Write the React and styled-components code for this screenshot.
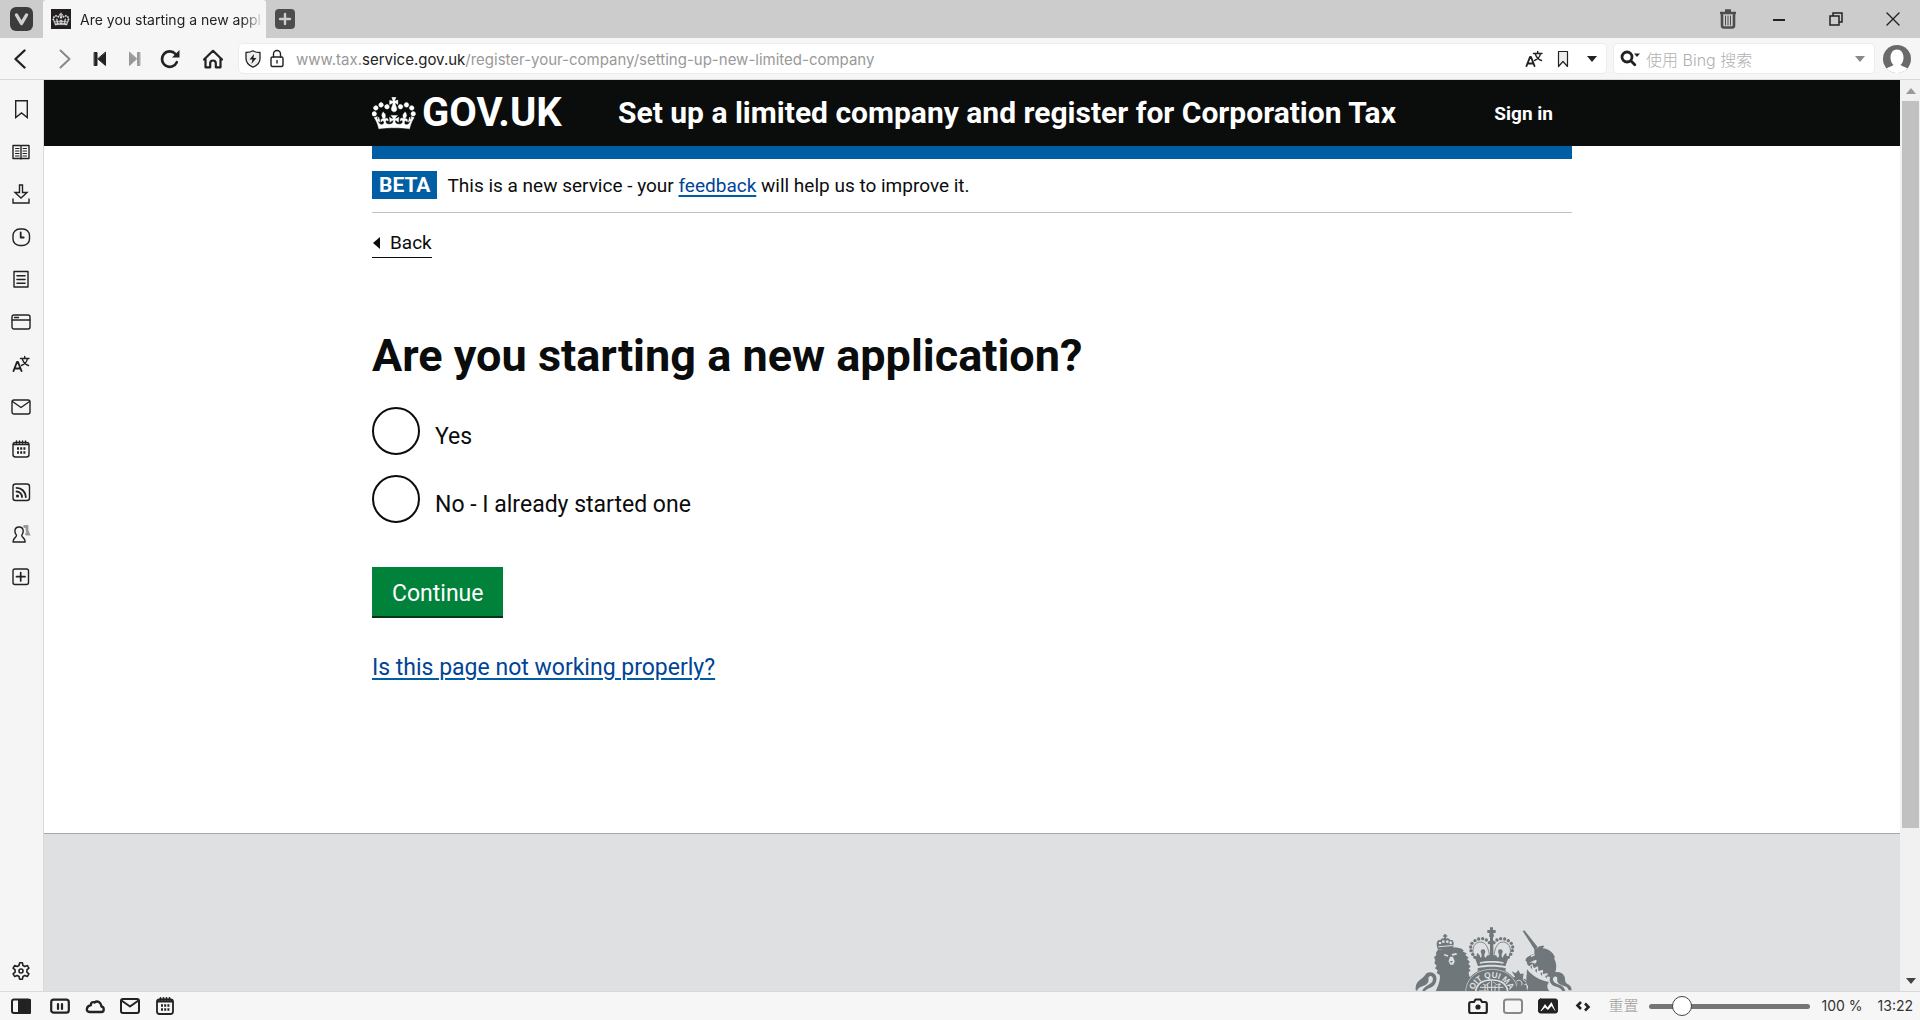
import React from "react";
import styled, { createGlobalStyle } from "styled-components";

const uiFont = `Inter, "Noto Sans CJK SC", sans-serif`;
const pageFont = `Roboto, sans-serif`;

const GlobalStyle = createGlobalStyle`
  *, *::before, *::after { box-sizing: border-box; }
  html, body { margin: 0; }
  button, input { font: inherit; }
`;

/* ---------- browser shell ---------- */

const Browser = styled.div`
  display: flex;
  flex-direction: column;
  height: 100vh;
  overflow: hidden;
  background: #f6f6f6;
  font-family: ${uiFont};
  font-size: 14px;
  color: #222;
`;

const TabBar = styled.div`
  display: flex;
  align-items: center;
  flex: none;
  height: 38px;
  padding: 0 15px 0 10px;
  background: #cccccc;
`;

const IconButton = styled.button`
  display: flex;
  align-items: center;
  justify-content: center;
  flex: none;
  width: ${(p) => p.$width || 24}px;
  height: 24px;
  margin: 0;
  padding: 0;
  border: 0;
  background: none;
  color: ${(p) => p.$color || "#222"};
`;

const Tab = styled.div`
  display: flex;
  align-items: center;
  gap: 9px;
  flex: none;
  width: 223px;
  height: 100%;
  margin: 0 7px 0 9px;
  padding: 0 2px 0 8px;
  border-radius: 3px 3px 0 0;
  background: #f6f6f6;
`;

const TabTitle = styled.span`
  flex: 1;
  padding-top: 1px;
  line-height: 20px;
  white-space: nowrap;
  color: #222;
  mask-image: linear-gradient(to right, #000 88%, transparent 100%);
`;

const WindowControls = styled.div`
  display: flex;
  align-items: center;
  gap: ${(p) => p.$gap}px;
  margin-left: auto;
`;

const Toolbar = styled.div`
  display: flex;
  align-items: center;
  flex: none;
  height: 42px;
  padding: 0 7px 0 8px;
  border-bottom: 1px solid #d9d9d9;
`;

const Group = styled.div`
  display: flex;
  align-items: center;
  gap: ${(p) => p.$gap}px;
  padding: 0 ${(p) => p.$side || 0}px;
`;

const Field = styled.div`
  display: flex;
  align-items: center;
  flex: ${(p) => (p.$width ? "none" : "1")};
  width: ${(p) => (p.$width ? `${p.$width}px` : "auto")};
  height: 31px;
  padding: 0 2px 0 4px;
  border: 1px solid #ececec;
  border-radius: 5px;
  background: #fff;
`;

const Address = styled.div`
  flex: 1;
  overflow: hidden;
  padding: 2px 0 0 8px;
  font-size: 15px;
  line-height: 20px;
  white-space: nowrap;
  color: #999;
`;

const Domain = styled.span`
  color: #222;
`;

const SearchInput = styled.input`
  flex: 1;
  min-width: 0;
  height: 26px;
  padding: 2px 0 0 4px;
  border: 0;
  outline: 0;
  background: none;
  font-size: 16px;
  font-weight: 300;
  &::placeholder { color: #b0b0b0; opacity: 1; }
`;

const Workspace = styled.div`
  display: flex;
  flex: 1;
  min-height: 0;
`;

const Panel = styled.nav`
  display: flex;
  flex-direction: column;
  align-items: center;
  justify-content: space-between;
  flex: none;
  width: 44px;
  padding: 8px 2px 8px 0;
  border-right: 1px solid #d9d9d9;
  background: #f5f5f5;
`;

const PanelList = styled.div`
  display: grid;
  grid-auto-rows: 1fr;
  align-items: center;
  height: 510px;
`;

const StatusBar = styled.footer`
  display: flex;
  align-items: center;
  justify-content: space-between;
  flex: none;
  height: 29px;
  padding: 0 7px 0 8px;
  border-top: 1px solid #d9d9d9;
  background: #f6f6f6;
`;

const ResetButton = styled.button`
  margin: 0 5px 0 2px;
  padding: 0;
  border: 0;
  background: none;
  font-size: 15px;
  font-weight: 300;
  line-height: 20px;
  color: #999;
`;

const ZoomSlider = styled.input`
  appearance: none;
  width: 161px;
  height: 20px;
  margin: 0;
  background: none;
  &::-webkit-slider-runnable-track {
    height: 5px;
    border-radius: 3px;
    background: #757575;
  }
  &::-webkit-slider-thumb {
    appearance: none;
    width: 20px;
    height: 20px;
    margin-top: -8px;
    border: 1px solid #444;
    border-radius: 50%;
    background: #fff;
  }
`;

const StatusText = styled.span`
  margin-left: ${(p) => p.$gap || 0}px;
  line-height: 20px;
  white-space: nowrap;
  color: #333;
`;

const ScrollBar = styled.div`
  display: flex;
  flex-direction: column;
  flex: none;
  width: 20px;
  padding: 0 1px 0 2px;
  background: #f1f1f1;
`;

const ScrollArrow = styled.button`
  display: flex;
  align-items: center;
  justify-content: center;
  height: 21px;
  padding: 0;
  border: 0;
  background: none;
  color: ${(p) => p.$color};
`;

const ScrollTrack = styled.div`
  display: grid;
  grid-template-rows: 727fr 142fr;
  flex: 1;
`;

const ScrollThumb = styled.div`
  background: #c1c1c1;
`;

/* ---------- web page ---------- */

const Page = styled.div`
  flex: 1;
  min-width: 0;
  overflow: hidden;
  background: #fff;
  font-family: ${pageFont};
  font-size: 23px;
  line-height: 30px;
  color: #0b0c0c;
`;

const Container = styled.div`
  max-width: 1200px;
  margin: 0 auto;
`;

const Header = styled.header`
  background: #0b0c0c;
`;

const HeaderRow = styled(Container)`
  display: flex;
  align-items: center;
  height: 66px;
`;

const Logo = styled.a`
  display: flex;
  align-items: center;
  gap: 6px;
  flex: none;
  width: 246px;
  font-size: 40px;
  font-weight: 700;
  line-height: 40px;
  text-decoration: none;
  color: #fff;
`;

const ServiceName = styled.a`
  font-size: 30px;
  font-weight: 700;
  line-height: 40px;
  white-space: nowrap;
  text-decoration: none;
  color: #fff;
`;

const SignIn = styled.a`
  margin-left: auto;
  padding-right: 19px;
  font-size: 19px;
  font-weight: 700;
  line-height: 25px;
  text-decoration: none;
  color: #fff;
`;

const BlueBar = styled(Container)`
  height: 13px;
  background: #005ea5;
`;

const PhaseBanner = styled(Container)`
  display: flex;
  align-items: center;
  gap: 10px;
  padding: 12px 0 13px;
  border-bottom: 1px solid #bfc1c3;
  font-size: 19px;
  line-height: 28px;
`;

const PhaseTag = styled.strong`
  padding: 0 7px;
  background: #005ea5;
  font-size: 21px;
  color: #fff;
`;

const PhaseText = styled.span`
  padding-top: 1px;
  line-height: 27px;
`;

const Link = styled.a`
  color: #004497;
  text-decoration: underline;
  text-decoration-color: #005ea5;
  text-decoration-thickness: 2px;
  text-underline-offset: 3px;
`;

const BackLink = styled.a`
  display: inline-flex;
  align-items: center;
  gap: 10px;
  margin-top: 17px;
  padding-bottom: 2px;
  border-bottom: 1px solid #0b0c0c;
  font-size: 19px;
  line-height: 25px;
  text-decoration: none;
  color: #0b0c0c;
`;

const Main = styled.main`
  padding: 73px 0 150px;
`;

const Question = styled.fieldset`
  display: flex;
  flex-direction: column;
  gap: 20px;
  margin: 0 0 44px;
  padding: 0;
  border: 0;
`;

const Heading = styled.h1`
  margin: 0 0 26px;
  font-size: 45px;
  font-weight: 700;
  line-height: 50px;
`;

const Choice = styled.div`
  display: flex;
  gap: 15px;
`;

const Radio = styled.input`
  appearance: none;
  flex: none;
  width: 48px;
  height: 48px;
  margin: 0;
  border: 2px solid #0b0c0c;
  border-radius: 50%;
  background: #fff;
`;

const ChoiceLabel = styled.label`
  padding-top: 15px;
`;

const ContinueButton = styled.button`
  display: block;
  margin: 0 0 37px;
  padding: 12px 20px 7px;
  border: 0;
  background: #00823b;
  box-shadow: 0 2px 0 #003618;
  line-height: 30px;
  color: #fff;
`;

const PageFooter = styled.footer`
  padding-top: 93px;
  border-top: 1px solid #a1acb2;
  background: #dee0e2;
`;

const FooterRow = styled(Container)`
  display: flex;
  justify-content: flex-end;
`;

/* ---------- drawings ---------- */

const crownPath =
  "M6.7 12.2c1 .4 2.1-.1 2.5-1s-.1-2.1-1-2.5c-1-.4-2.1.1-2.5 1-.4 1 0 2.1 1 2.5m-4.3 2.5c1 .4 2.1-.1 2.5-1s-.1-2.1-1-2.5c-1-.4-2.1.1-2.5 1-.5 1 0 2.1 1 2.5m-1.3 4.8c1 .4 2.1-.1 2.5-1 .4-1-.1-2.1-1-2.5-1-.4-2.1.1-2.5 1-.4 1 0 2.1 1 2.5m10.4-5.8c1 .4 2.1-.1 2.5-1s-.1-2.1-1-2.5c-1-.4-2.1.1-2.5 1s0 2.1 1 2.5m17.4-1.5c-1 .4-2.1-.1-2.5-1s.1-2.1 1-2.5c1-.4 2.1.1 2.5 1 .5 1 0 2.1-1 2.5m4.3 2.5c-1 .4-2.1-.1-2.5-1s.1-2.1 1-2.5c1-.4 2.1.1 2.5 1 .5 1 0 2.1-1 2.5m1.3 4.8c-1 .4-2.1-.1-2.5-1-.4-1 .1-2.1 1-2.5 1-.4 2.1.1 2.5 1 .4 1 0 2.1-1 2.5m-10.4-5.8c-1 .4-2.1-.1-2.5-1s.1-2.1 1-2.5c1-.4 2.1.1 2.5 1s0 2.1-1 2.5m-5.3-4.9 2.4 1.3V6.5l-2.4.8c-.1-.1-.1-.1-.2-.1s1-3 1-3h-3.4l1 3c-.1.1-.2.1-.2.1-.1.1-.1.1-.2.1l-2.4-.7v3.5L17 8.9c.1.1.2.2.3.2l-1.4 4.2c-.1.2-.1.4-.1.6 0 1.1.8 2 1.9 2.2h.7c1-.2 1.9-1.1 1.9-2.1 0-.2 0-.4-.1-.6l-1.4-4.3c-.1 0 0-.1.1-.3m-1 20.3c4.6 0 8.9.3 12.8.9 1.1-4.6 2.4-7.2 3.8-9.1l-2.6-.9c.3 1.3.3 1.9 0 2.8-.4-.4-.8-1.2-1.1-2.4l-1.2 4.2c.8-.5 1.4-.9 2-.9-1.2 2.6-2.7 3.2-3.6 3-1.2-.2-1.7-1.3-1.5-2.2.3-1.3 1.6-1.6 2.2-.1 1.2-2.4-.8-3.1-2.1-2.4 2-2 2.2-3.6.6-5.8-2.2 1.7-2.3 3.4-1.2 5.9-1.4-1.6-3.5-.8-2.8 1.7.9-1.4 2.1-.4 1.9.8-.2 1-1.7 1.9-3.5 1.7-2.6-.2-2.8-2.1-2.8-3.3.6-.1 1.8.5 2.8 1.7l.4-4.3c-1.1 1.1-2.1 1.3-3.2 1.4.4-1.1 2.1-2.7 2.1-2.7h-5.500s1.800 1.600 2.100 2.700c-1.100 0-2.100-.2-3.200-1.400l.4 4.300c1-1.200 2.200-1.800 2.800-1.700-.1 1.200-.2 3.100-2.800 3.300-1.900.2-3.300-.7-3.500-1.700-.2-1.200 1-2.200 1.900-.8.7-2.400-1.300-3.300-2.800-1.700 1.100-2.600 1-4.300-1.200-5.900-1.600 2.200-1.400 3.800.6 5.800-1.300-.7-3.200 0-2.100 2.400.6-1.500 1.900-1.100 2.200.1.2.9-.3 1.900-1.500 2.200-.9.2-2.500-.5-3.600-3 .6 0 1.200.3 2 .9l-1.200-4.200c-.3 1.100-.7 1.900-1.100 2.400-.3-.8-.2-1.400 0-2.800l-2.600.9c1.400 1.800 2.700 4.500 3.800 9.100 3.900-.6 8.300-.9 12.900-.9";

const Crown = ({ width, height }) => (
  <svg width={width} height={height} viewBox="0 4 36 27" fill="#fff" stroke="#fff" strokeWidth=".35" aria-hidden="true">
    <path d={crownPath} />
  </svg>
);

const Favicon = () => (
  <svg width="20" height="20" viewBox="-3 -4 42 42" aria-hidden="true">
    <rect x="-3" y="-4" width="42" height="42" fill="#231f20" />
    <path d={crownPath} fill="#ddd" stroke="#ddd" strokeWidth=".5" />
  </svg>
);

const Icon = ({ size = 20, children, stroke = 1.4, h }) => (
  <svg
    width={size}
    height={h || size}
    viewBox={`0 0 ${size} ${h || size}`}
    fill="none"
    stroke="currentColor"
    strokeWidth={stroke}
    strokeLinecap="round"
    strokeLinejoin="round"
    aria-hidden="true"
  >
    {children}
  </svg>
);

const VivaldiIcon = () => (
  <Icon size={24} stroke={3.4}>
    <rect x="0" y="0" width="23" height="24" rx="6" fill="#3c3c3c" stroke="none" />
    <path d="M6.500 8l5 8.500L16.500 8" stroke="#d0d0d0" />
  </Icon>
);
const PlusIcon = () => (
  <Icon stroke={2.4}>
    <rect width="20" height="20" rx="4" fill="#4d4d4d" stroke="none" />
    <path d="M10 5v10M5 10h10" stroke="#ccc" />
  </Icon>
);
const TrashIcon = () => (
  <Icon stroke={2}>
    <path d="M2 4h16M7 1.500h6" strokeWidth="2.500" strokeLinecap="butt" />
    <path d="M4 6v10.500a2 2 0 0 0 2 2h8a2 2 0 0 0 2-2V6" strokeWidth="2.600" />
    <path d="M7.500 7v9M10 7v9M12.500 7v9" strokeWidth="1" />
  </Icon>
);
const MinimizeIcon = () => (
  <Icon stroke={2}><path d="M4 11h12" strokeLinecap="butt" /></Icon>
);
const RestoreIcon = () => (
  <Icon stroke={1.5}>
    <path d="M4 7h9v9H4zM7 7V4h9v9h-3" strokeLinejoin="miter" />
  </Icon>
);
const CloseIcon = () => (
  <Icon stroke={1.4}><path d="M4 4l12 12M16 4L4 16" /></Icon>
);

const BackIcon = () => (<Icon stroke={2.4}><path d="M14.500 1.500L5.500 10l9 8.500" /></Icon>);
const ForwardIcon = () => (<Icon stroke={2}><path d="M5.500 1.500l9 8.500-9 8.500" /></Icon>);
const RewindIcon = () => (
  <Icon stroke={1}>
    <path d="M4.500 3.500h2.500v13H4.500zM15.500 3.500v13L8 10z" fill="currentColor" />
  </Icon>
);
const FastForwardIcon = () => (
  <Icon stroke={1}>
    <path d="M14.500 3.500H12.500v13h2zM4.500 3.500v13l7-6.500z" fill="currentColor" />
  </Icon>
);
const ReloadIcon = () => (
  <Icon stroke={2.6}>
    <path d="M16.800 13.200A7.700 7.700 0 1 1 15.500 5" />
    <path d="M19.500 1v7.500H12z" fill="currentColor" stroke="none" />
  </Icon>
);
const HomeIcon = () => (
  <Icon stroke={2.2}>
    <path d="M1 10.500L10 1.800l9 8.700M2.500 9.500v8.800h4.700v-4a2.800 2.800 0 0 1 5.600 0v4h4.700V9.500" />
  </Icon>
);
const ShieldIcon = () => (
  <Icon stroke={1.3}>
    <path d="M10 1.800c2 1.300 4.500 1.700 7 1.700v6c0 4-3 7-7 8.700-4-1.700-7-4.700-7-8.700v-6c2.500 0 5-.4 7-1.700z" fill="#eee" />
    <path d="M11 5l-4.500 5.500h3L8.500 15l5-6h-3z" fill="currentColor" stroke="none" />
  </Icon>
);
const LockIcon = () => (
  <Icon stroke={1.4}>
    <rect x="4" y="8" width="12" height="9.500" rx="1.500" />
    <path d="M6.500 8V5a3.500 3.500 0 0 1 7 0v3M10 11.500v2.500" />
  </Icon>
);
const TranslateIcon = () => (
  <Icon stroke={1.5}>
    <path d="M2.500 17L6 8h1l3.500 9M3.700 14.500h5.600" strokeWidth="1.900" />
    <path d="M9.500 4.500h8.500M13.700 2.500v2M16.500 4.500c-.5 3-3 5.700-6 7M11.500 5.500c1 3 3 5 6 6" strokeWidth="1.400" />
  </Icon>
);
const BookmarkIcon = () => (
  <Icon stroke={1.4}><path d="M4.700 1.700h11.600v16.800l-5.800-4.500-5.800 4.500z" strokeLinejoin="miter" /></Icon>
);
const SmallBookmarkIcon = () => (
  <Icon stroke={1.2}><path d="M5.500 2.500h9v15L10 12.500l-4.500 5z" fill="#eee" /></Icon>
);
const CaretIcon = ({ up }) => (
  <Icon size={10} h={6} stroke={0}>
    <path d={up ? "M0 6h10L5 0z" : "M0 0h10L5 6z"} fill="currentColor" />
  </Icon>
);
const SearchIcon = () => (
  <Icon stroke={2.8}>
    <circle cx="7" cy="8" r="5" />
    <path d="M10.800 11.800l4 4" />
    <path d="M14 4.500h6L17 8z" fill="currentColor" stroke="none" />
  </Icon>
);
const AvatarIcon = () => (
  <svg width="28" height="28" viewBox="0 0 28 28" aria-hidden="true">
    <circle cx="14" cy="14" r="14" fill="#6a6a6a" />
    <path d="M3.500 23.500c2-1.500 5-1.800 7-3.500-2-1.700-3-4.500-3-7.500C7.500 8 10 4.500 14 4.500s6.500 3.500 6.500 8c0 3-1 5.800-3 7.500 2 1.700 5 2 7 3.500A14 14 0 0 1 14 28 14 14 0 0 1 3.500 23.500z" fill="#fff" />
  </svg>
);

const ReadingIcon = () => (
  <Icon>
    <path d="M2 3.500h7.500l.5.500.5-.5H18v13H10.500l-.5.500-.5-.5H2zM10 4v13" />
    <path d="M4.500 6.500h3.500M4.500 9h3.500M4.500 11.500h3.500M4.500 14h3.500M12 6.500h3.500M12 9h3.500M12 11.500h3.500M12 14h3.500" strokeWidth="1" />
  </Icon>
);
const DownloadIcon = () => (
  <Icon>
    <path d="M8.500 1h3v7.500H16L10 14 4 8.500h4.500zM2 15v4h16v-4" strokeLinejoin="miter" />
  </Icon>
);
const HistoryIcon = () => (
  <Icon><rect x="2" y="2" width="16.500" height="16.500" rx="6.500" /><path d="M9.700 5.500v5h3" strokeWidth="1.800" /></Icon>
);
const NotesIcon = () => (
  <Icon><path d="M3 2.500h14v15.500H3zM3 2.500h14" /><path d="M6 6.700h8M6 10.500h8M6 14.200h8" strokeWidth="1.600" /></Icon>
);
const WindowIcon = () => (
  <Icon><rect x="1" y="3" width="18" height="14" rx="2" /><path d="M1 8h18M3.500 5.500h4" /></Icon>
);
const MailIcon = ({ stroke }) => (
  <Icon stroke={stroke}><rect x="1" y="3" width="18" height="14" rx="2" /><path d="M1.500 4.500L10 10.500l8.500-6" /></Icon>
);
const CalendarIcon = ({ stroke }) => (
  <Icon stroke={stroke}>
    <rect x="2" y="3.500" width="16" height="14.500" rx="2.500" />
    <path d="M5.500 2v2M8.500 2v2M11.500 2v2M14.500 2v2M2.500 5.500h15" />
    <path d="M6 9.500h2M9.200 9.500h2M12.400 9.500h2M6 13.500h2M9.200 13.500h2M12.400 13.500h2" strokeWidth="2.600" strokeLinecap="butt" />
  </Icon>
);
const FeedIcon = () => (
  <Icon>
    <rect x="2" y="2" width="16.500" height="16.500" rx="2.500" />
    <path d="M5.500 9.500a5.500 5.500 0 0 1 5.500 5.500M5.500 5.800A9.300 9.300 0 0 1 14.800 15" strokeWidth="1.800" />
    <circle cx="6.500" cy="14" r="1.600" fill="currentColor" stroke="none" />
  </Icon>
);
const ContactsIcon = () => (
  <Icon>
    <path d="M13.500 2.500h2.500v4l1.500 3.500h-2" stroke="#999" strokeWidth="2.800" strokeLinejoin="miter" />
    <path d="M8 3c3 0 4.200 2 4.200 4.300 0 2-1 3-1.500 4.200.3 2.500 3.500 2 3.500 6.500H2c0-4.500 3.200-4 3.500-6.500C5 10.300 3.900 9.300 3.900 7.300 3.900 5 5 3 8 3z" />
  </Icon>
);
const AddPanelIcon = () => (
  <Icon><rect x="2" y="2" width="15.500" height="15.500" rx="2" /><path d="M9.700 5.500v8.500M5.500 9.700h8.500" strokeWidth="1.700" /></Icon>
);
const GearIcon = () => (
  <Icon stroke={1.6}>
    <path d="M8.600 1.800h2.800l.6 2.700 1.800 1 2.600-.9 1.500 2.500-2 1.800v2.200l2 1.800-1.500 2.500-2.600-.9-1.800 1-.6 2.700H8.600L8 15.500l-1.800-1-2.600.9-1.500-2.500 2-1.800V8.900l-2-1.800 1.500-2.500 2.600.9 1.800-1z" />
    <circle cx="10" cy="10" r="2" />
  </Icon>
);

const PanelToggleIcon = () => (
  <Icon stroke={2}><rect x="1" y="3.500" width="18" height="13.500" rx="2" /><path d="M8 4h11v13H8z" fill="currentColor" /></Icon>
);
const TilingIcon = () => (
  <Icon stroke={2.2}><rect x="1.200" y="3.700" width="17.600" height="13" rx="2.500" /><path d="M8 8v5M12 8v5" strokeWidth="2.200" /></Icon>
);
const CloudIcon = () => (
  <Icon stroke={2.3}><path d="M4.500 16h12c3 0 3-5 0-5.500C16 6.500 12.500 4 9.500 6.500c-2-1-4 0-3.500 2.500-5 1-5.500 7-1.500 7z" /></Icon>
);
const CameraIcon = () => (
  <Icon stroke={2.200}>
    <path d="M3 6h3l1.500-2.500h5L14 6h3a1.800 1.800 0 0 1 1.800 1.800v7.400A1.800 1.800 0 0 1 17 17H3a1.800 1.800 0 0 1-1.800-1.800V7.800A1.800 1.800 0 0 1 3 6z" />
    <circle cx="10" cy="11" r="1.500" fill="currentColor" />
  </Icon>
);
const FrameIcon = () => (
  <Icon stroke={2}><rect x="1" y="3.500" width="18" height="13.500" rx="2.500" /></Icon>
);
const ImageIcon = () => (
  <Icon stroke={1}>
    <rect x=".5" y="3" width="19" height="14" rx="2" fill="currentColor" />
    <path d="M2.500 15l4.500-7 2.500 3.500 4-5.500 4 9z" fill="#fff" stroke="none" />
    <path d="M3 15.500l4-4 3 2.500 3.500-4 4 5.500z" fill="currentColor" stroke="none" />
  </Icon>
);
const CodeIcon = () => (
  <Icon stroke={2.600}><path d="M8 6L4.500 9.500 8 13M12 7.500l3.500 3.500-3.500 3.500" strokeLinecap="butt" strokeLinejoin="miter" /></Icon>
);

const BackArrow = () => (
  <svg width="8" height="12" viewBox="0 0 8 12" aria-hidden="true"><path d="M8 0v12L1 6z" fill="#0b0c0c" /></svg>
);

/* Beads that trace one arch of the large crown; the other arch mirrors it */
const archBeads = [
  [233, 62], [224, 54], [213, 50], [201, 51], [190, 56], [181, 64], [177, 75], [178, 86], [183, 97], [190, 106],
];

const Crest = () => (
  <svg width="157" height="64" viewBox="10 15 471 192" fill="#6f777b" role="img" aria-label="Royal coat of arms">
    {/* lion */}
    <path d="M76 74c-3-14 3-22 10-19 4-6 8-7 11-5l1-6h-4v-4h4v-4h5v4h4v4h-4l1 6c5-3 9 0 12 5 8-3 12 5 9 17l-3 7-43 4z" />
    <g fill="#dee0e2">
      <circle cx="85" cy="63" r="4" /><circle cx="95" cy="59" r="4" /><circle cx="107" cy="59" r="4" /><circle cx="117" cy="62" r="4" />
      <path d="M80 73l43-4v3l-43 4z" />
    </g>
    <path d="M78 84l46-8c14 0 24 2 32 9l-2 4 11 5-4 5 10 8-5 4 9 9-5 5 7 9-6 5 6 7-6 4c0 12 4 20 16 26l-14 16-6 21H70l9-22c5-12 7-22 5-32l-9-6 3-8-8-6 5-8-7-8 3-8-4-10 7-5-1-8z" />
    <g fill="#dee0e2">
      <path d="M98 96l12 4-2 4-12-4zM120 96l14-3 2 5-14 3z" />
      <path d="M115 104h9l5 14-4 10h-9l-5-10z" />
    </g>
    <path d="M114 117h10l-5 6z" />
    <path d="M12 205c-1-14 2-21 9-28 9-9 14-10 20-19 7-10 24-10 31 2 5 11 2 23-6 31-9 7-23 9-27 18h-8c3-12 13-17 23-23 9-5 12-14 8-21-4-5-10-3-12 3 3 14-5 22-18 25-8 3-14 6-15 13z" />
    {/* crown */}
    <path d="M235 16h9v8h8v9h-7l2 10-3 3v8h-9v-8l-3-3 2-10h-7v-9h8z" />
    <path d="M235 54h10v55h-10z" />
    {archBeads.map(([x, y]) => (
      <React.Fragment key={`${x}-${y}`}>
        <circle cx={x} cy={y} r="5" />
        <circle cx={480 - x} cy={y} r="5" />
      </React.Fragment>
    ))}
    <path d="M188 106c-8-18-6-42 16-46 20-2 28 22 30 48M292 106c8-18 6-42-16-46-20-2-28 22-30 48" fill="none" stroke="#6f777b" strokeWidth="2.500" />
    <path d="M191 111c3-6 5-12 5-18 5 3 9 7 10 14 4 0 5-6 3-13h10c-2 7-1 13 3 13l5-7h26l5 7c4 0 5-6 3-13h10c-2 7-1 13 3 13 1-7 5-11 10-14 0 6 2 12 5 18l-8 22c-22-6-60-6-82 0z" />
    <path d="M204 121c20-5 52-5 72 0l-1 4c-20-4-50-4-70 0z" fill="#dee0e2" />
    <circle cx="214" cy="89" r="7" /><circle cx="266" cy="89" r="7" />
    <path d="M198 139c22-6 62-6 84 0v8c-22-6-62-6-84 0z" />
    {/* garter and shield */}
    <path d="M158 215c0-46 34-76 82-76s82 30 82 76z" />
    <path d="M189 215c0-30 20-43 51-43s51 13 51 43z" fill="#dee0e2" />
    <path d="M194 215c0-27 18-39 46-39s46 12 46 39z" />
    <path d="M240 175v40M205 196h70M214 186c8 6 12 4 20-6M246 180c8 10 14 10 22 6M202 207h30M250 190v17M262 184v24M220 188v18M228 184v20" fill="none" stroke="#dee0e2" strokeWidth="3" />
    <path d="M162 212c0-42 33-70 78-70s78 28 78 70" fill="none" stroke="#dee0e2" strokeWidth="2" />
    <path id="garter-arc" d="M182 226a58 59 0 0 1 116 0" fill="none" />
    <text fontFamily="Liberation Sans, sans-serif" fontSize="25" fontWeight="700" fill="#dee0e2">
      <textPath href="#garter-arc" startOffset="50%" textAnchor="middle">OIT QUI MA</textPath>
    </text>
    {/* unicorn */}
    <path d="M333 27l5-2 40 50-9 8z" />
    <path d="M372 72l3 8c6-8 14-10 23-8l-5 7c18 2 32 12 37 28l-3 2c8 14 9 30 3 44l-2 6-14 6c-20-4-40-16-52-34l-8 2c-6-3-9-7-8-12l-5-6 3-7c8-7 16-10 24-13 0-9 0-17 4-23z" />
    <g fill="#dee0e2">
      <path d="M357 101l13-6-2 6-9 4zM350 122c10-2 16-8 24-9 2 4 0 9-4 12-6-3-12-4-20-3z" />
      <path d="M350 135l12-10 4 14 13-6 1 14 14-4v13l14-3-2 12 14-1-5 12c-26-2-50-18-65-41z" />
    </g>
    <path d="M356 134l4-4 2 13zM370 144l6-4-1 13zM386 154l6-3-1 12zM400 162l6-2-1 10z" />
    <path d="M346 142c16 20 38 34 66 38-8 10-6 20 2 28h-66c-6-22-4-46-2-66z" />
    <path d="M300 148l12 6 8-10 6 12 10-2-2 14 14 8-6 10 6 22h-40c4-10 12-16 8-28l-12-12 6-4z" />
    <path d="M332 154c10-8 16 2 8 8-8 6-6 16 4 16M316 176c10-4 18 4 14 14M338 188c8-4 12 4 8 14" fill="none" stroke="#dee0e2" strokeWidth="3" />
    <path d="M480 205c0-12-6-16-14-20-8-6-4-14-8-22-8-18-36-16-42-1-6 16 2 28 18 32 10 3 16 7 18 14h9c-2-12-10-18-22-21-12-4-18-12-14-20 4-6 12-4 12 2-3 12 6 20 18 22 10 2 14 6 16 14z" />
  </svg>
);

const panels = [
  ["Bookmarks", <BookmarkIcon />],
  ["Reading list", <ReadingIcon />],
  ["Downloads", <DownloadIcon />],
  ["History", <HistoryIcon />],
  ["Notes", <NotesIcon />],
  ["Window", <WindowIcon />],
  ["Translate", <TranslateIcon />],
  ["Mail", <MailIcon />],
  ["Calendar", <CalendarIcon />],
  ["Feeds", <FeedIcon />],
  ["Contacts", <ContactsIcon />],
  ["Add panel", <AddPanelIcon />],
];

export default function App() {
  return (
    <Browser>
      <GlobalStyle />
      <TabBar>
        <IconButton aria-label="Menu"><VivaldiIcon /></IconButton>
        <Tab>
          <Favicon />
          <TabTitle>Are you starting a new appl</TabTitle>
        </Tab>
        <IconButton aria-label="New tab"><PlusIcon /></IconButton>
        <WindowControls $gap={27}>
          <IconButton aria-label="Closed tabs" $color="#4d4d4d"><TrashIcon /></IconButton>
          <WindowControls $gap={33}>
            <IconButton aria-label="Minimise"><MinimizeIcon /></IconButton>
            <IconButton aria-label="Restore"><RestoreIcon /></IconButton>
            <IconButton aria-label="Close"><CloseIcon /></IconButton>
          </WindowControls>
        </WindowControls>
      </TabBar>

      <Toolbar>
        <Group $gap={21}>
          <IconButton aria-label="Back"><BackIcon /></IconButton>
          <Group $gap={11}>
            <IconButton aria-label="Forward" $color="#888"><ForwardIcon /></IconButton>
            <IconButton aria-label="Rewind"><RewindIcon /></IconButton>
            <IconButton aria-label="Fast forward" $color="#999"><FastForwardIcon /></IconButton>
          </Group>
        </Group>
        <Group $gap={21} $side={13}>
          <IconButton $width={20} aria-label="Reload"><ReloadIcon /></IconButton>
          <IconButton aria-label="Home"><HomeIcon /></IconButton>
        </Group>
        <Field>
          <Group $gap={3}>
            <IconButton $width={20} aria-label="Content blocker"><ShieldIcon /></IconButton>
            <IconButton $width={22} aria-label="Site information"><LockIcon /></IconButton>
          </Group>
          <Address>
            www.tax.<Domain>service.gov.uk</Domain>/register-your-company/setting-up-new-limited-company
          </Address>
          <Group $gap={5}>
            <IconButton aria-label="Translate page"><TranslateIcon /></IconButton>
            <IconButton aria-label="Bookmark page"><SmallBookmarkIcon /></IconButton>
            <IconButton aria-label="Bookmarks menu"><CaretIcon /></IconButton>
          </Group>
        </Field>
        <Group $side={6}>
          <Field $width={262}>
            <IconButton aria-label="Search engine"><SearchIcon /></IconButton>
            <SearchInput aria-label="搜索" placeholder="使用 Bing 搜索" />
            <IconButton aria-label="Search history" $color="#888"><CaretIcon /></IconButton>
          </Field>
        </Group>
        <IconButton $width={32} aria-label="Account"><AvatarIcon /></IconButton>
      </Toolbar>

      <Workspace>
        <Panel aria-label="Panels">
          <PanelList>
            {panels.map(([name, icon]) => (
              <IconButton key={name} aria-label={name}>{icon}</IconButton>
            ))}
          </PanelList>
          <IconButton aria-label="Settings"><GearIcon /></IconButton>
        </Panel>

        <Page>
          <Header>
            <HeaderRow>
              <Logo href="#home">
                <Crown width={44} height={33} />
                GOV.UK
              </Logo>
              <ServiceName href="#service">Set up a limited company and register for Corporation Tax</ServiceName>
              <SignIn href="#sign-in">Sign in</SignIn>
            </HeaderRow>
          </Header>
          <BlueBar />
          <PhaseBanner>
            <PhaseTag>BETA</PhaseTag>
            <PhaseText>
              This is a new service - your <Link href="#feedback">feedback</Link> will help us to improve it.
            </PhaseText>
          </PhaseBanner>
          <Container>
            <BackLink href="#back"><BackArrow />Back</BackLink>
            <Main>
              <Heading id="question">Are you starting a new application?</Heading>
              <Question aria-labelledby="question">
                <Choice>
                  <Radio type="radio" name="application" id="yes" />
                  <ChoiceLabel htmlFor="yes">Yes</ChoiceLabel>
                </Choice>
                <Choice>
                  <Radio type="radio" name="application" id="no" />
                  <ChoiceLabel htmlFor="no">No - I already started one</ChoiceLabel>
                </Choice>
              </Question>
              <ContinueButton>Continue</ContinueButton>
              <Link href="#report">Is this page not working properly?</Link>
            </Main>
          </Container>
          <PageFooter>
            <FooterRow><Crest /></FooterRow>
          </PageFooter>
        </Page>

        <ScrollBar>
          <ScrollArrow $color="#999" aria-label="Scroll up"><CaretIcon up /></ScrollArrow>
          <ScrollTrack><ScrollThumb /></ScrollTrack>
          <ScrollArrow $color="#444" aria-label="Scroll down"><CaretIcon /></ScrollArrow>
        </ScrollBar>
      </Workspace>

      <StatusBar>
        <Group $gap={10}>
          <Group $gap={13}>
            <IconButton $width={26} aria-label="Toggle panel"><PanelToggleIcon /></IconButton>
            <IconButton $width={26} aria-label="Page tiling"><TilingIcon /></IconButton>
          </Group>
          <Group $gap={11}>
            <IconButton aria-label="Sync"><CloudIcon /></IconButton>
            <IconButton aria-label="Mail status"><MailIcon stroke={2} /></IconButton>
            <IconButton aria-label="Calendar status"><CalendarIcon stroke={1.8} /></IconButton>
          </Group>
        </Group>
        <Group $gap={11}>
          <IconButton aria-label="Capture page"><CameraIcon /></IconButton>
          <IconButton aria-label="Frame" $color="#888"><FrameIcon /></IconButton>
          <IconButton aria-label="Images"><ImageIcon /></IconButton>
          <IconButton aria-label="Page actions"><CodeIcon /></IconButton>
          <Group $gap={5}>
            <ResetButton>重置</ResetButton>
            <ZoomSlider type="range" min="20" max="500" defaultValue="100" aria-label="Zoom" />
            <StatusText $gap={7}>100 %</StatusText>
            <StatusText $gap={10}>13:22</StatusText>
          </Group>
        </Group>
      </StatusBar>
    </Browser>
  );
}
